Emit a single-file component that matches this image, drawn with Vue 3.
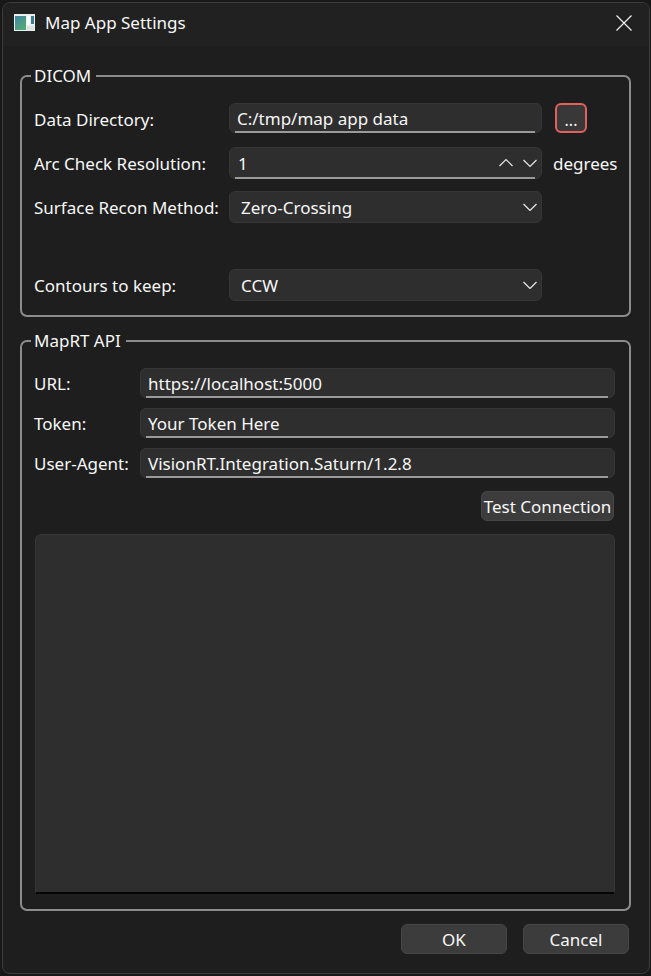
<script setup>
const dicomRows = [
  { label: 'Arc Check Resolution:', value: '1' }
]
const apiRows = [
  { label: 'URL:', value: 'https://localhost:5000' },
  { label: 'Token:', value: 'Your Token Here' },
  { label: 'User-Agent:', value: 'VisionRT.Integration.Saturn/1.2.8' }
]
</script>

<template>
  <div class="window">
    <header class="titlebar">
      <svg class="app-icon" width="21" height="17" viewBox="0 0 21 17">
        <defs>
          <linearGradient id="map" x1="0" y1="0" x2="0.6" y2="1">
            <stop offset="0" stop-color="#3f86a6" />
            <stop offset="1" stop-color="#52a874" />
          </linearGradient>
        </defs>
        <rect width="21" height="17" fill="#eceff0" />
        <rect x="1" y="2" width="11" height="14" fill="url(#map)" />
        <rect x="13" y="2" width="3" height="9" fill="#fafbfb" />
        <rect x="17" y="2" width="3" height="8" fill="#3a7c94" />
        <rect x="13" y="12" width="7" height="4" fill="#dde1e2" />
      </svg>
      <span class="title">Map App Settings</span>
      <svg class="close" width="16" height="16" viewBox="0 0 16 16">
        <path d="M0.500 0.500L15.500 15.500M15.500 0.500L0.500 15.500" stroke="#f0f0f0" stroke-width="1.200" fill="none" />
      </svg>
    </header>

    <main class="body">
      <fieldset class="group dicom">
        <legend>DICOM</legend>
        <div class="dicom-grid">
          <label>Data Directory:</label>
          <div class="field first">C:/tmp/map app data</div>
          <button class="browse">...</button>

          <template v-for="row in dicomRows" :key="row.label">
            <label>{{ row.label }}</label>
            <div class="field spin">
              <span>{{ row.value }}</span>
              <svg width="38" height="10" viewBox="0 0 38 10">
                <path d="M0.500 8L7 1.500L13.500 8M24.500 2L31 8.500L37.500 2" stroke="#e8e8e8" stroke-width="1.200" fill="none" />
              </svg>
            </div>
            <span class="unit">degrees</span>
          </template>

          <label>Surface Recon Method:</label>
          <div class="combo">
            <span>Zero-Crossing</span>
            <svg width="14" height="8" viewBox="0 0 14 8"><path d="M0.500 1L7 7.500L13.500 1" stroke="#e8e8e8" stroke-width="1.200" fill="none" /></svg>
          </div>
          <span></span>

          <label class="spaced">Contours to keep:</label>
          <div class="combo spaced">
            <span>CCW</span>
            <svg width="14" height="8" viewBox="0 0 14 8"><path d="M0.500 1L7 7.500L13.500 1" stroke="#e8e8e8" stroke-width="1.200" fill="none" /></svg>
          </div>
        </div>
      </fieldset>

      <fieldset class="group api">
        <legend>MapRT API</legend>
        <div class="api-grid">
          <template v-for="row in apiRows" :key="row.label">
            <label>{{ row.label }}</label>
            <div class="field">{{ row.value }}</div>
          </template>
        </div>
        <div class="test-row">
          <button class="btn test">Test Connection</button>
        </div>
        <div class="log"></div>
      </fieldset>

      <footer class="actions">
        <button class="btn action">OK</button>
        <button class="btn action">Cancel</button>
      </footer>
    </main>
  </div>
</template>

<style>
html, body {
  margin: 0;
  background: #181818;
}
</style>

<style scoped>
.window {
  box-sizing: border-box;
  width: 648px;
  height: 972px;
  margin: 2px 0 0 2px;
  background: #1e1e1e;
  border: 1px solid #3c3c3c;
  border-radius: 8px;
  display: flex;
  flex-direction: column;
  overflow: hidden;
  font-family: "Noto Sans", sans-serif;
  font-size: 17px;
  color: #f7f7f7;
}

.titlebar {
  box-sizing: border-box;
  height: 43px;
  flex: none;
  display: flex;
  align-items: center;
  padding: 0 17px 4px 11px;
  background: #212121;
}

.app-icon {
  flex: none;
}

.title {
  margin-left: 10px;
}

.close {
  margin-left: auto;
}

.body {
  flex: 1;
  display: flex;
  flex-direction: column;
  padding: 19px 18px 0 17px;
}

.group {
  box-sizing: border-box;
  margin: 0;
  min-width: 0;
  border: 2px solid #8c8c8c;
  border-radius: 7px;
  padding: 0 14px 0 12px;
}

legend {
  padding: 0 5px 0 3px;
  margin-left: -3px;
  line-height: 22px;
}

.dicom {
  height: 252px;
}

.api {
  height: 581px;
  margin-top: 13px;
}

label {
  white-space: nowrap;
}

.dicom-grid {
  display: grid;
  grid-template-columns: 195px 313px auto;
  row-gap: 12px;
  align-items: center;
  padding-top: 16px;
}

.first {
  margin-bottom: 2px;
}

.spaced {
  margin-top: 34px;
}

.api-grid {
  display: grid;
  grid-template-columns: 106px 1fr;
  row-gap: 10px;
  align-items: center;
  padding-top: 16px;
}

.field,
.combo {
  position: relative;
  box-sizing: border-box;
  height: 30px;
  display: flex;
  align-items: center;
  padding: 0 7px;
  background: #2e2e2e;
  border: 1px solid #363636;
  border-radius: 6px;
}

.field::after {
  content: "";
  position: absolute;
  left: 5px;
  right: 6px;
  bottom: -1px;
  height: 2px;
  background: #9a9a9a;
}

.spin,
.combo {
  justify-content: space-between;
  height: 32px;
  padding: 0 4px 0 8px;
}

.combo {
  padding-left: 11px;
}

.browse {
  box-sizing: border-box;
  width: 32px;
  height: 30px;
  margin: 0 0 2px 13px;
  padding: 3px 0 0;
  background: #383838;
  border: 2px solid #e5605d;
  border-radius: 6px;
  color: #f7f7f7;
  font: inherit;
  font-size: 16px;
}

.unit {
  margin-left: 11px;
}

.btn {
  box-sizing: border-box;
  height: 30px;
  padding: 0;
  background: #3c3c3c;
  border: 1px solid #464646;
  border-radius: 6px;
  color: #f7f7f7;
  font: inherit;
}

.test-row {
  display: flex;
  justify-content: flex-end;
  margin: 13px 1px 0 0;
}

.test {
  width: 133px;
}

.log {
  box-sizing: border-box;
  height: 360px;
  margin: 13px 0 0 1px;
  background: #2e2e2e;
  border: 1px solid #363636;
  border-bottom: 2px solid #050505;
  border-radius: 6px 6px 0 0;
}

.actions {
  display: flex;
  justify-content: flex-end;
  gap: 16px;
  margin: 13px 2px 0 0;
}

.action {
  width: 106px;
}
</style>
